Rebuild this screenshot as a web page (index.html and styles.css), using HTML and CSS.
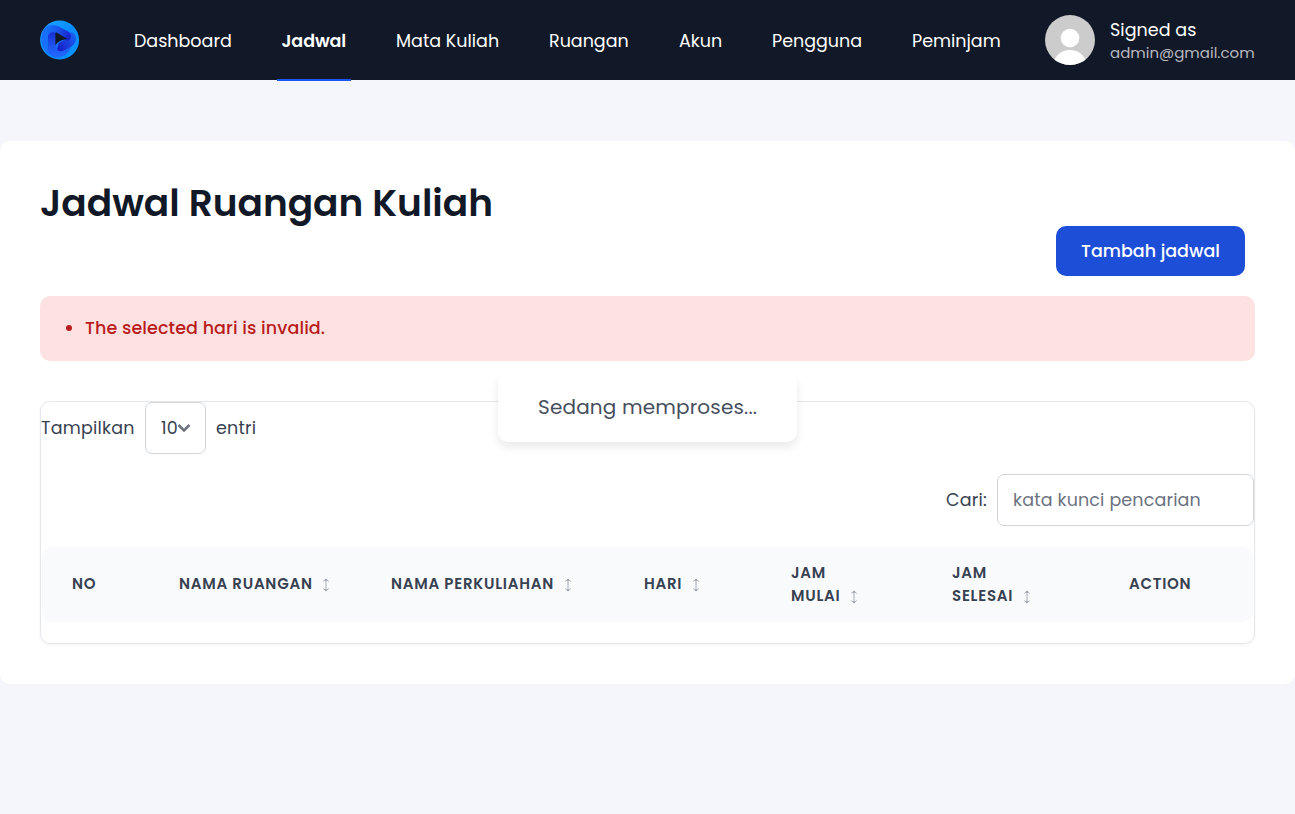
FILE: index.html
```html
<!DOCTYPE html>
<html lang="id">
<head>
<meta charset="utf-8">
<title>Jadwal Ruangan Kuliah</title>
<link rel="stylesheet" href="styles.css">
</head>
<body>
<svg class="defs" aria-hidden="true">
  <symbol id="sort" viewBox="0 0 8 14"><path d="M4 1v12M1.3 3.4 4 .9l2.7 2.5M1.3 10.600 4 13.100l2.700-2.500" fill="none" stroke="currentColor" stroke-width=".9"/><path d="M2.300 2.700 4 1l1.700 1.700zM2.300 11.300 4 13l1.700-1.700z" fill="currentColor"/></symbol>
</svg>
<header class="topbar">
  <svg class="logo" viewBox="0 0 40 40">
    <defs>
      <linearGradient id="ring" x1="0" y1="0" x2="1" y2="1"><stop offset="0" stop-color="#20a8ff"/><stop offset=".5" stop-color="#078cff"/><stop offset="1" stop-color="#0894ff"/></linearGradient>
      <linearGradient id="top" gradientUnits="userSpaceOnUse" x1="6" y1="8" x2="30" y2="17"><stop offset="0" stop-color="#1573f8"/><stop offset=".5" stop-color="#1b52ea"/><stop offset="1" stop-color="#1720c8"/></linearGradient>
      <linearGradient id="right" gradientUnits="userSpaceOnUse" x1="35" y1="17" x2="19" y2="29"><stop offset="0" stop-color="#1c5cf0"/><stop offset="1" stop-color="#1720c8"/></linearGradient>
      <linearGradient id="left" gradientUnits="userSpaceOnUse" x1="12" y1="12" x2="14" y2="36"><stop offset="0" stop-color="#1a2fd4"/><stop offset=".6" stop-color="#1e55ee"/><stop offset="1" stop-color="#1f68fa"/></linearGradient>
      <clipPath id="disc"><circle cx="19.600" cy="20" r="19.500"/></clipPath>
    </defs>
    <g clip-path="url(#disc)">
      <path d="M0 0h40v40H0z" fill="url(#ring)"/>
      <path d="M2 13C4 6 11 3 18 6l10 5c5 3 8 7 7 12l-13 9c-6 4-12 4-16 0C2 27 0 20 2 13z" fill="#1770fa"/>
      <path d="M36 18c0 5-3 8-7 10l-6 3c-2 2-5 1-6-2l2-6 9-5 3-6c3 1 5 3 5 6z" fill="url(#right)"/>
      <path d="M5 15c1-8 8-11 14-8l9 4.500c4 2.500 3.500 8-.500 9.500L16 14c-3-2-7-2-11 1z" fill="url(#top)"/>
      <path d="M8 17c0-5 6-6 8-3v12c0 5 3 6 7 5l8-4c-3 8-10 12-17 10-5-2-6-6-6-10z" fill="url(#left)"/>
    </g>
    <path d="M15.400 12.700c.5-.4 1-.2 1.500.1L27.500 19c-5 .6-9 2-12.100 6.300z" fill="#101827"/>
  </svg>
  <nav class="nav">
    <a class="nav-link">Dashboard</a>
    <a class="nav-link active">Jadwal</a>
    <a class="nav-link">Mata Kuliah</a>
    <a class="nav-link">Ruangan</a>
    <a class="nav-link">Akun</a>
    <a class="nav-link">Pengguna</a>
    <a class="nav-link">Peminjam</a>
  </nav>
  <div class="user">
    <svg class="avatar" viewBox="0 0 50 50"><clipPath id="round"><circle cx="25" cy="25" r="25"/></clipPath><g clip-path="url(#round)"><path d="M0 0h50v50H0z" fill="#ccc"/><circle cx="25" cy="23" r="9.300" fill="#fff"/><circle cx="25" cy="52.500" r="17.500" fill="#fff"/></g></svg>
    <div class="who">
      <div class="signed">Signed as</div>
      <div class="email">admin@gmail.com</div>
    </div>
  </div>
</header>
<main class="card">
  <h1 class="title">Jadwal Ruangan Kuliah</h1>
  <div class="actions"><button class="add">Tambah jadwal</button></div>
  <ul class="alert"><li>The selected hari is invalid.</li></ul>
  <section class="panel">
    <div class="length"><span class="show">Tampilkan</span><span class="select"><span class="ten">10</span><svg class="chevron" viewBox="0 0 14 10"><path d="m1.500 2 5.500 5.500L12.500 2" fill="none" stroke="#6b7280" stroke-width="2.500"/></svg></span><span class="entries">entri</span></div>
    <div class="filter"><label class="cari" for="q">Cari:</label><input id="q" class="search" placeholder="kata kunci pencarian"></div>
    <div class="thead">
      <span>NO</span>
      <span>NAMA RUANGAN<svg class="sort"><use href="#sort"/></svg></span>
      <span>NAMA PERKULIAHAN<svg class="sort"><use href="#sort"/></svg></span>
      <span>HARI<svg class="sort"><use href="#sort"/></svg></span>
      <span>JAM<br>MULAI<svg class="sort"><use href="#sort"/></svg></span>
      <span>JAM<br>SELESAI<svg class="sort"><use href="#sort"/></svg></span>
      <span>ACTION</span>
    </div>
    <div class="processing">Sedang memproses...</div>
  </section>
</main>
</body>
</html>
```
FILE: styles.css
```css
* { box-sizing: border-box; }
body { margin: 0; background: #f4f6fb; font-family: Poppins, Inter, sans-serif; font-size: 17.5px; color: #374151; }
.defs { display: none; }
.topbar { display: flex; align-items: center; height: 80px; padding: 0 40px; background: #111827; color: #fff; }
.logo { width: 40px; height: 40px; flex: none; }
.nav { display: grid; grid-template-columns: 108px 74px 113px 90px 53px 100px 99px; gap: 40px; margin-left: 49px; }
.nav-link { height: 81px; margin-bottom: -1px; padding: 1px 5px 0; line-height: 80px; white-space: nowrap; border-bottom: 2px solid transparent; }
.nav-link.active { padding-left: 4.5px; font-weight: 600; letter-spacing: -.1px; border-bottom-color: #1c56f5; }
.user { display: flex; align-items: center; gap: 15px; margin-left: auto; width: 210px; white-space: nowrap; }
.avatar { width: 50px; height: 50px; flex: none; }
.who { padding-top: 2px; }
.signed { line-height: 24px; letter-spacing: .05px; }
.email { font-size: 15px; line-height: 22px; color: #b8bac0; }
.card { margin-top: 61px; height: 543px; padding: 40px; background: #fff; border-radius: 10px; }
.title { margin: 0; font-size: 37.5px; line-height: 45px; font-weight: 600; color: #111827; }
.actions { display: flex; justify-content: flex-end; padding-right: 10px; }
.add { width: 189px; height: 50px; padding: 0; border: 0; border-radius: 10px; background: #1d4ed8; color: #fff; font: 500 17.5px Poppins, Inter, sans-serif; white-space: nowrap; }
.alert { margin: 20px 0 40px; height: 65px; padding: 20px 25px; border-radius: 10px; background: #fee2e2; color: #b91c1c; font-weight: 500; line-height: 24px; letter-spacing: .1px; list-style: none; }
.alert li { display: flex; align-items: center; }
.alert li::before { content: ""; width: 6px; height: 6px; margin: 0 13px 0 1px; border-radius: 50%; background: #b91c1c; }
.panel { position: relative; height: 243px; border: 1px solid #e5e7eb; border-radius: 10px; box-shadow: 0 1px 3px #0000000d; }
.length { display: flex; align-items: center; height: 52px; letter-spacing: .2px; }
.show { width: 104px; }
.select { display: flex; align-items: center; width: 61px; height: 52px; padding-left: 15px; border: 1px solid #d1d5db; border-radius: 7px; background: #fff; }
.ten { width: 15px; }
.chevron { width: 14px; height: 10px; margin-left: 1px; }
.entries { margin-left: 10px; }
.filter { display: flex; align-items: center; justify-content: flex-end; margin-top: 20px; height: 52px; }
.cari { width: 51px; letter-spacing: .2px; }
.search { width: 257px; height: 52px; padding: 0 15px; border: 1px solid #d1d5db; border-radius: 7px; font: 17.5px Poppins, Inter, sans-serif; letter-spacing: .15px; background: transparent; }
.search::placeholder { color: #6b7280; opacity: 1; }
.thead { display: grid; grid-template-columns: 107px 212px 253px 147px 161px 177px 154px; align-items: center; margin: 21px 1px 0; height: 75px; padding-bottom: 2px; border-radius: 10px; background: #f9fafc; font-size: 15px; font-weight: 600; line-height: 23px; letter-spacing: .75px; white-space: nowrap; }
.thead > span { padding-left: 30px; }
.sort { width: 8px; height: 14px; margin-left: 9.5px; vertical-align: -3px; color: #9ca3af; }
.processing { position: absolute; left: 457px; top: -30px; width: 299px; height: 70px; padding-left: 40px; border-radius: 10px; background: #fff; opacity: .92; box-shadow: 0 5px 8px #00000017; font-size: 20px; line-height: 70px; letter-spacing: .16px; white-space: nowrap; }
```
